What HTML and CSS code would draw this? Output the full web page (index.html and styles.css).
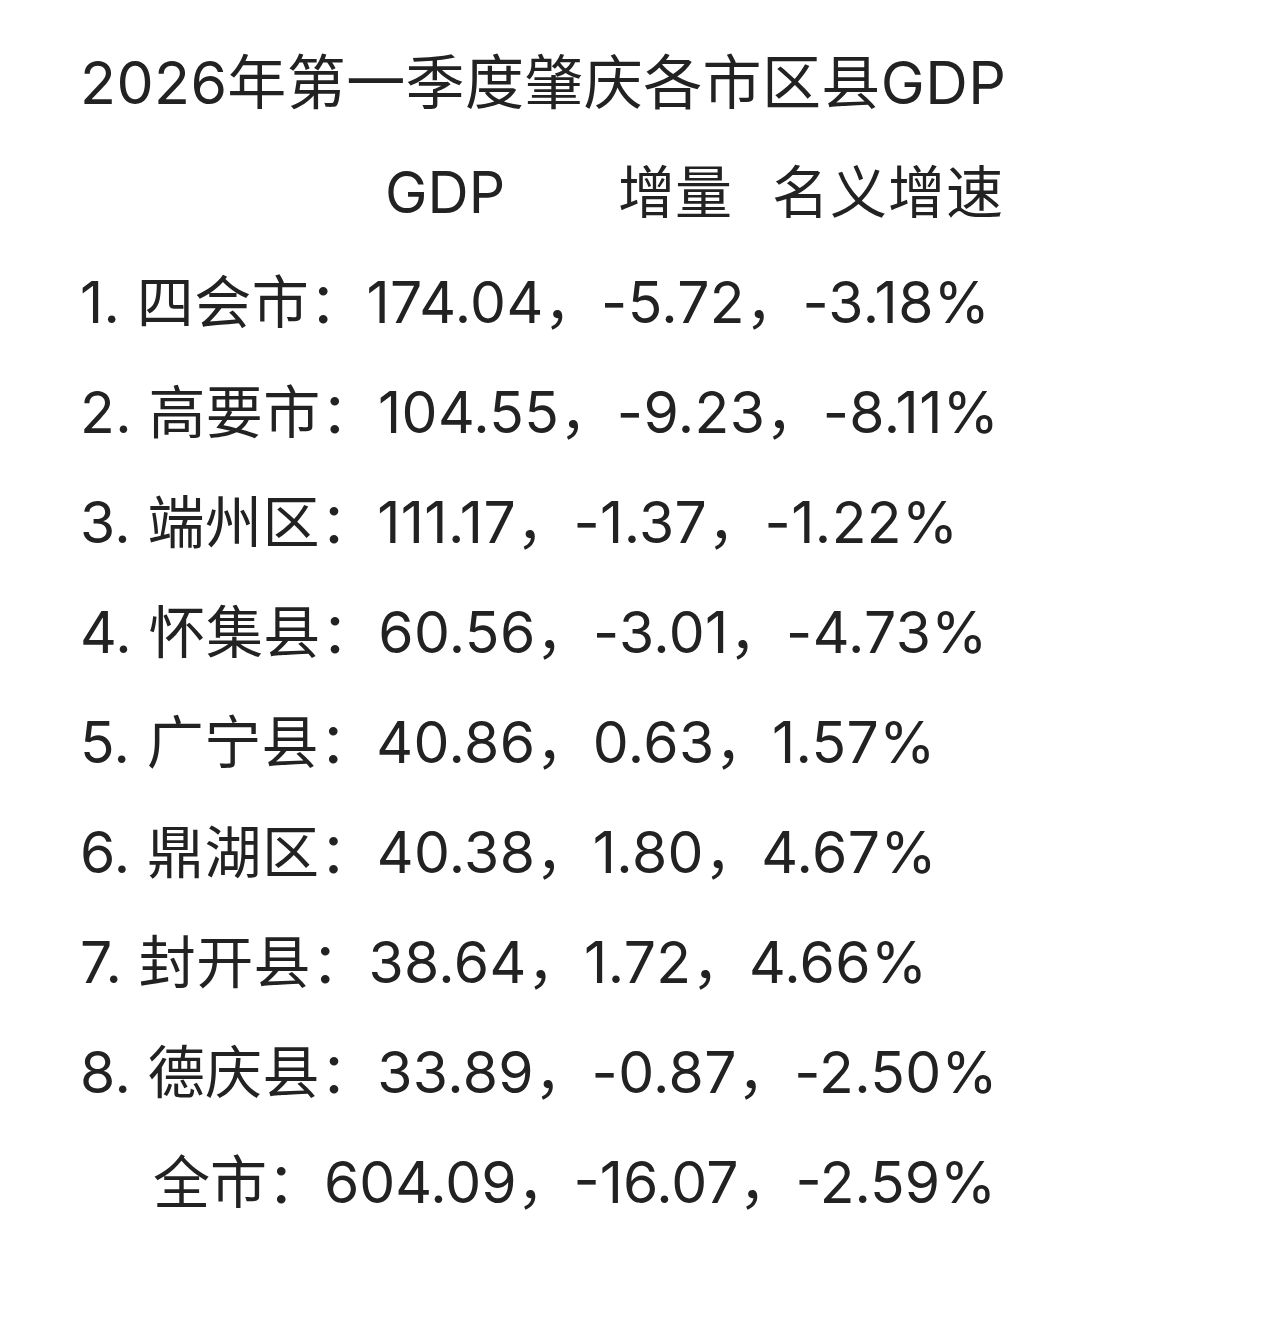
FILE: index.html
```html
<!DOCTYPE html>
<html lang="zh-CN">
<head>
<meta charset="utf-8">
<title>2026年第一季度肇庆各市区县GDP</title>
<link rel="stylesheet" href="styles.css">
</head>
<body>
<main class="sheet">
  <div class="line title">2026年第一季度肇庆各市区县GDP</div>
  <div class="line header">
    <span class="col col-gdp">GDP</span>
    <span class="col col-inc">增量</span>
    <span class="col col-rate">名义增速</span>
  </div>
  <div class="line row">1. 四会市：174.04，-5.72，-3.18%</div>
  <div class="line row">2. 高要市：104.55，-9.23，-8.11%</div>
  <div class="line row">3. 端州区：111.17，-1.37，-1.22%</div>
  <div class="line row">4. 怀集县：60.56，-3.01，-4.73%</div>
  <div class="line row">5. 广宁县：40.86，0.63，1.57%</div>
  <div class="line row">6. 鼎湖区：40.38，1.80，4.67%</div>
  <div class="line row">7. 封开县：38.64，1.72，4.66%</div>
  <div class="line row">8. 德庆县：33.89，-0.87，-2.50%</div>
  <div class="line total">全市：604.09，-16.07，-2.59%</div>
</main>
</body>
</html>
```

FILE: styles.css
```css
html, body {
  margin: 0;
  padding: 0;
  background: #ffffff;
}

.sheet {
  width: 1280px;
  height: 1336px;
  box-sizing: border-box;
  padding: 28px 0 0 80px;
  color: #222222;
  font-family: Inter, "Noto Sans CJK SC", sans-serif;
  font-size: 57px;
}

.line {
  height: 110px;
  line-height: 110px;
  white-space: pre;
}

.title {
  font-size: 59px;
  letter-spacing: 0.4px;
}

.row {
  letter-spacing: 0.4px;
}

.header {
  display: flex;
}

.col {
  display: block;
}

.col-gdp {
  margin-left: 305px;
  width: 233px;
}

.col-inc {
  width: 154px;
}

.col-rate {
  letter-spacing: 1px;
}

.total {
  padding-left: 73px;
}
```
